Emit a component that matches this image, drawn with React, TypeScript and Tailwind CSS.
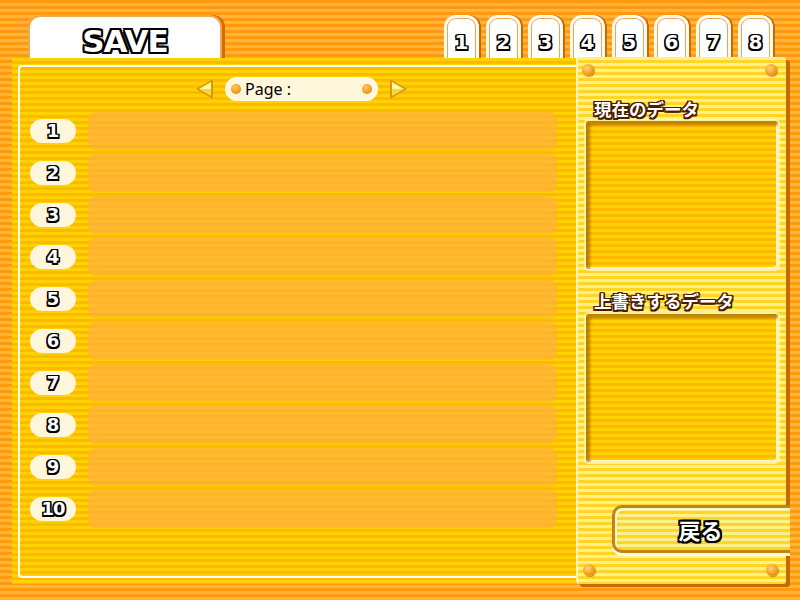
import React from "react";

const outerStripes =
  "bg-[image:repeating-linear-gradient(180deg,#ff9a10_0px,#ff9a10_3px,#ffb53e_3px,#ffb53e_6px)]";
const panelStripes =
  "bg-[image:repeating-linear-gradient(180deg,#ffd200_0px,#ffd200_3px,#ffb900_3px,#ffb900_6px)]";
const sideStripes =
  "bg-[image:repeating-linear-gradient(180deg,#fff08a_0px,#fff08a_3px,#ffd628_3px,#ffd628_6px)]";

// white letters with a thick black rim
const blackRim =
  "text-white [text-shadow:-2px_-2px_0_#000,2px_-2px_0_#000,-2px_2px_0_#000,2px_2px_0_#000,0_-2px_0_#000,0_2px_0_#000,-2px_0_0_#000,2px_0_0_#000]";
const thinRim =
  "text-white [text-shadow:-1.5px_-1.5px_0_#000,1.5px_-1.5px_0_#000,-1.5px_1.5px_0_#000,1.5px_1.5px_0_#000,0_-1.5px_0_#000,0_1.5px_0_#000,-1.5px_0_0_#000,1.5px_0_0_#000]";
const brownRim =
  "text-white [text-shadow:-1.5px_-1.5px_0_#4a1c00,1.5px_-1.5px_0_#4a1c00,-1.5px_1.5px_0_#4a1c00,1.5px_1.5px_0_#4a1c00,0_-1.5px_0_#4a1c00,0_1.5px_0_#4a1c00,-1.5px_0_0_#4a1c00,1.5px_0_0_#4a1c00]";

const rivet =
  "absolute w-[12px] h-[12px] rounded-full bg-[radial-gradient(circle_at_40%_35%,#ffd27a_0%,#f5a020_55%,#d07a00_100%)] shadow-[1px_1px_1px_rgba(120,60,0,0.5)]";

const dataBox = `${panelStripes} ml-[8px] w-[192px] h-[148px] rounded-[3px] shadow-[inset_4px_4px_3px_rgba(140,80,0,0.6),inset_-2px_-2px_0_rgba(255,250,220,0.9),0_0_0_2px_rgba(255,248,210,0.7)]`;

const Arrow = ({ dir }: { dir: "left" | "right" }) => (
  <svg width="17" height="20" viewBox="0 0 17 20">
    {dir === "left" ? (
      <>
        <polygon points="17,0 0,10 17,20" fill="#d89a00" />
        <polygon points="15,3 3,10 15,10" fill="#fff6b0" />
        <polygon points="15,10 3,10 15,17" fill="#ffd640" />
      </>
    ) : (
      <>
        <polygon points="0,0 17,10 0,20" fill="#d89a00" />
        <polygon points="2,3 14,10 2,10" fill="#fff6b0" />
        <polygon points="2,10 14,10 2,17" fill="#ffd640" />
      </>
    )}
  </svg>
);

const Dot = () => (
  <span className="block shrink-0 w-[10px] h-[10px] rounded-full bg-[radial-gradient(circle_at_40%_35%,#ffc860_0%,#f09a20_60%,#d07800_100%)]" />
);

export default function App() {
  const tabs = [1, 2, 3, 4, 5, 6, 7, 8];
  const rows = [1, 2, 3, 4, 5, 6, 7, 8, 9, 10];

  return (
    <div
      className={`${outerStripes} w-[800px] h-[600px] overflow-hidden flex flex-col font-['DejaVu_Sans',sans-serif]`}
    >
      {/* title tab and page tabs */}
      <div className="flex items-start pt-[15px] h-[65px]">
        <div className="ml-[28px] w-[194px] h-[50px] rounded-t-[12px] bg-white border-2 border-b-0 border-[#f2a850] shadow-[3px_0_0_#d06c00] flex justify-center pt-[6px]">
          <span className={`${blackRim} text-[31px] font-bold leading-[36px] tracking-[-1px]`}>
            SAVE
          </span>
        </div>
        <div className="ml-auto mr-[27px] flex gap-[7px]">
          {tabs.map((n) => (
            <div
              key={n}
              className="w-[35px] h-[50px] rounded-t-[12px] bg-[#fffaf0] px-[3px] pt-[3px] shadow-[2px_0_0_#c86a00]"
            >
              <div className="h-full rounded-t-[9px] border border-b-0 border-[#eea550] bg-white flex justify-center pt-[12px]">
                <span className={`${thinRim} text-[20px] font-bold leading-[22px]`}>{n}</span>
              </div>
            </div>
          ))}
        </div>
      </div>

      <div className="flex ml-[12px] -mt-[7px] relative">
        {/* slot list */}
        <div className={`${panelStripes} w-[564px] h-[526px] pt-[7px] pl-[6px] pb-[6px]`}>
          <div className="h-full border-2 border-r-0 border-white rounded-l-[4px]">
            <div className="flex items-center h-[24px] mt-[10px] pl-[176px]">
              <Arrow dir="left" />
              <div className="ml-[12px] w-[153px] h-[24px] rounded-full bg-[#fff6dc] border-2 border-[#fffbee] flex items-center px-[4px] gap-[4px]">
                <Dot />
                <span className="text-[16px] leading-[20px] text-black font-['Noto_Sans',sans-serif]">
                  Page :
                </span>
                <span className="ml-auto">
                  <Dot />
                </span>
              </div>
              <span className="ml-[12px] flex">
                <Arrow dir="right" />
              </span>
            </div>

            <div className="mt-[11px] flex flex-col gap-[4px]">
              {rows.map((n) => (
                <div key={n} className="flex items-center h-[38px]">
                  <div className="ml-[10px] w-[46px] h-[24px] rounded-full bg-[#fff6dc] flex items-center justify-center">
                    <span
                      className={`${thinRim} text-[18px] font-bold leading-[20px] ${n === 10 ? "tracking-[-1px]" : ""}`}
                    >
                      {n}
                    </span>
                  </div>
                  <div className="ml-[12px] w-[469px] h-full rounded-[8px] bg-[#ffb040]/70" />
                </div>
              ))}
            </div>
          </div>
        </div>

        {/* data preview */}
        <div
          className={`${sideStripes} relative w-[210px] h-[527px] -mt-[1px] rounded-[3px] border-l-2 border-[#fff4c0] shadow-[4px_3px_0_#c26c00] pt-[42px] font-['Noto_Sans_CJK_JP',sans-serif]`}
        >
          <span className={`${rivet} left-[4px] top-[7px]`} />
          <span className={`${rivet} left-[187px] top-[7px]`} />
          <span className={`${rivet} left-[5px] top-[507px]`} />
          <span className={`${rivet} left-[188px] top-[507px]`} />

          <div className={`${brownRim} pl-[16px] h-[20px] text-[17.5px] font-bold leading-[20px]`}>
            現在のデータ
          </div>
          <div className={`${dataBox} mt-[2px]`} />

          <div className={`${brownRim} pl-[16px] mt-[22px] h-[20px] text-[17.5px] font-bold leading-[20px]`}>
            上書きするデータ
          </div>
          <div className={`${dataBox} mt-[3px]`} />

          <div
            className={`${sideStripes} mt-[43px] ml-[34px] w-[178px] h-[48px] rounded-l-[10px] border-[3px] border-r-0 border-[#c08418] shadow-[inset_2px_2px_0_#fff6c8,0_3px_0_#fff8d8] flex items-center justify-center pr-[4px]`}
          >
            <span className={`${blackRim} text-[22px] font-bold leading-[26px]`}>戻る</span>
          </div>
        </div>
      </div>
    </div>
  );
}
